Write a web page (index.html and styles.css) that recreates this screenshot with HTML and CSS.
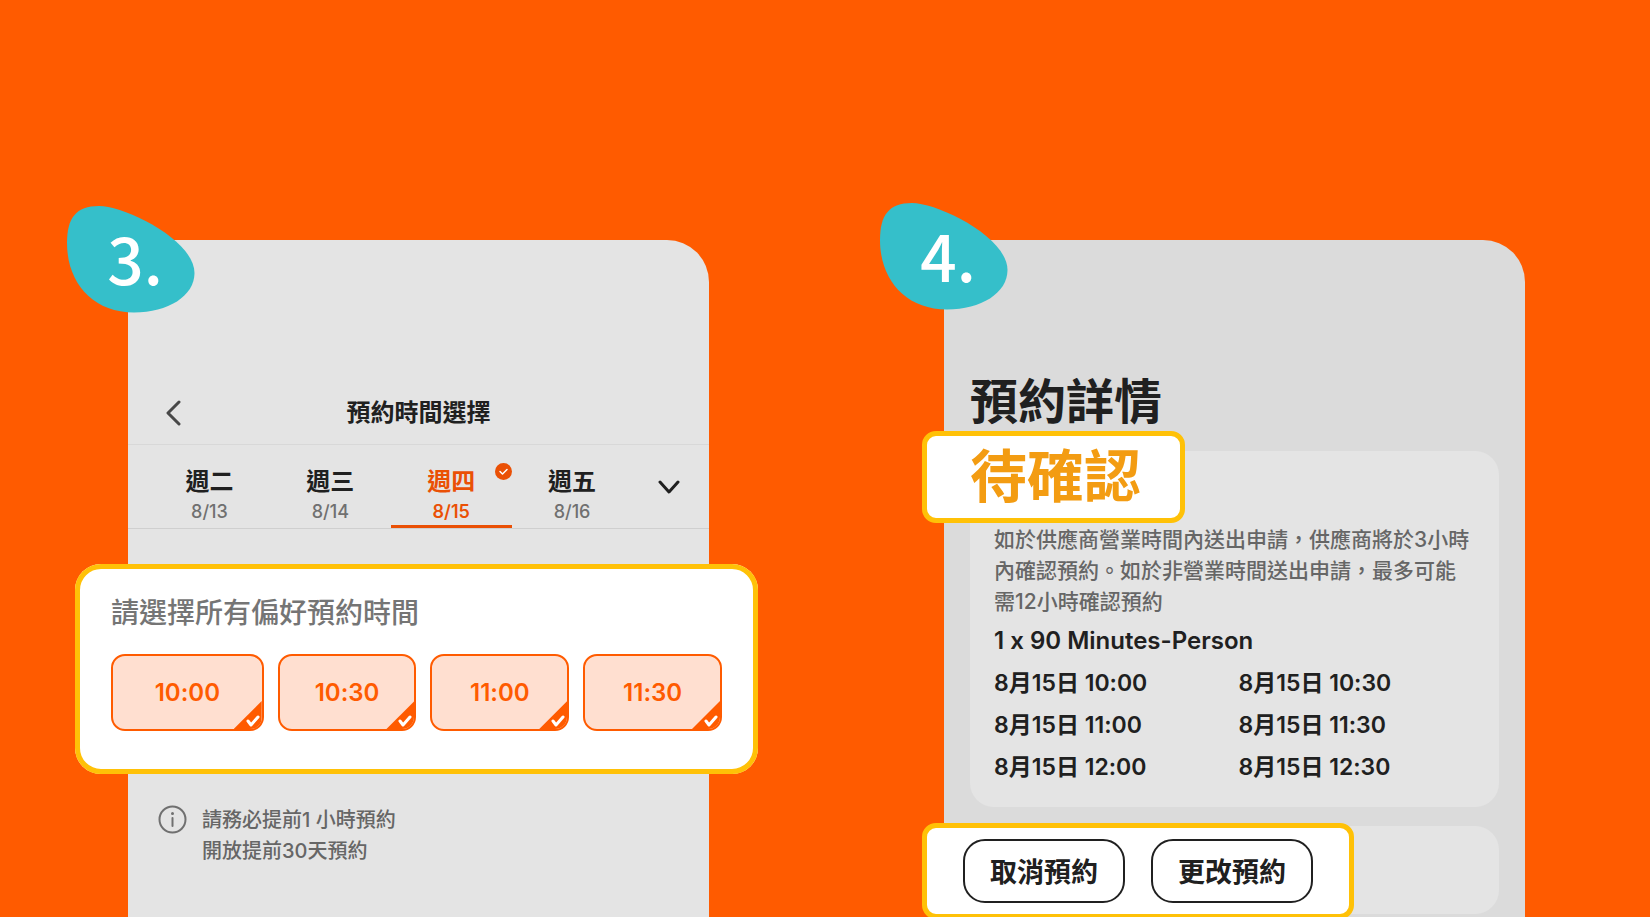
FILE: index.html
```
<!DOCTYPE html>
<html lang="zh-Hant">
<head>
    <meta charset="UTF-8">
    <meta name="viewport" content="width=device-width, initial-scale=1.0">
    <title>預約步驟</title>
    <link rel="stylesheet" href="styles.css">
</head>
<body>
    <main class="steps">
        <section class="phone phone-time">
            <div class="step-badge">
                <svg class="blob" viewBox="0 0 128 107" aria-hidden="true"><path d="M0 37C0 12 9 0 32 0C58 0 127.500 34 127.500 67C127.500 90 101 106.500 67 106.500C25 106.500 0 76 0 37Z"/></svg>
                <span class="step-number">3.</span>
            </div>
            <header class="phone-header">
                <button class="back-button" aria-label="返回">
                    <svg width="16" height="26" viewBox="0 0 16 26"><path d="M14 2L3 13L14 24"/></svg>
                </button>
                <h2 class="phone-title">預約時間選擇</h2>
            </header>
            <nav class="tabs">
                <button class="tab"><span class="tab-day">週二</span><span class="tab-date">8/13</span></button>
                <button class="tab"><span class="tab-day">週三</span><span class="tab-date">8/14</span></button>
                <button class="tab active">
                    <span class="tab-day">週四</span><span class="tab-date">8/15</span>
                    <svg class="tab-check" viewBox="0 0 17 17"><circle cx="8.5" cy="8.5" r="8.5"/><path d="M5 8.5L7.5 11L12 6.5"/></svg>
                </button>
                <button class="tab"><span class="tab-day">週五</span><span class="tab-date">8/16</span></button>
                <button class="more-button" aria-label="更多日期">
                    <svg width="22" height="14" viewBox="0 0 22 14"><path d="M2 2L11 12L20 2"/></svg>
                </button>
            </nav>
            <fieldset class="callout slot-card">
                <legend class="slot-title">請選擇所有偏好預約時間</legend>
                <div class="slots">
                    <label class="slot">10:00
                        <input class="slot-input" type="checkbox" checked>
                        <svg class="slot-check" viewBox="0 0 14 12"><path d="M2 6L5 10L12 2"/></svg>
                    </label>
                    <label class="slot">10:30
                        <input class="slot-input" type="checkbox" checked>
                        <svg class="slot-check" viewBox="0 0 14 12"><path d="M2 6L5 10L12 2"/></svg>
                    </label>
                    <label class="slot">11:00
                        <input class="slot-input" type="checkbox" checked>
                        <svg class="slot-check" viewBox="0 0 14 12"><path d="M2 6L5 10L12 2"/></svg>
                    </label>
                    <label class="slot">11:30
                        <input class="slot-input" type="checkbox" checked>
                        <svg class="slot-check" viewBox="0 0 14 12"><path d="M2 6L5 10L12 2"/></svg>
                    </label>
                </div>
            </fieldset>
            <div class="info">
                <svg class="info-icon" viewBox="0 0 29 29" aria-hidden="true"><circle cx="14.5" cy="14.5" r="13"/><path d="M14.5 13V21"/><circle class="dot" cx="14.5" cy="8.5" r="1.5"/></svg>
                <p class="note info-note">請務必提前1 小時預約<br>開放提前30天預約</p>
            </div>
        </section>

        <section class="phone phone-details">
            <div class="step-badge">
                <svg class="blob" viewBox="0 0 128 107" aria-hidden="true"><path d="M0 37C0 12 9 0 32 0C58 0 127.500 34 127.500 67C127.500 90 101 106.500 67 106.500C25 106.500 0 76 0 37Z"/></svg>
                <span class="step-number">4.</span>
            </div>
            <h1 class="details-title">預約詳情</h1>
            <div class="card booking">
                <div class="callout status">待確認</div>
                <p class="note">如於供應商營業時間內送出申請，供應商將於3小時內確認預約。如於非營業時間送出申請，最多可能需12小時確認預約</p>
                <p class="product">1 x 90 Minutes-Person</p>
                <ul class="times">
                    <li>8月15日 10:00</li>
                    <li>8月15日 10:30</li>
                    <li>8月15日 11:00</li>
                    <li>8月15日 11:30</li>
                    <li>8月15日 12:00</li>
                    <li>8月15日 12:30</li>
                </ul>
            </div>
            <div class="card actions">
                <div class="callout action-buttons">
                    <button class="action">取消預約</button>
                    <button class="action">更改預約</button>
                </div>
            </div>
        </section>
    </main>
</body>
</html>
```
FILE: styles.css
```
* {
    box-sizing: border-box;
}
body {
    margin: 0;
    background-color: #ff5b00;
    color: #202020;
    font-family: Inter, "Noto Sans CJK TC", sans-serif;
    font-weight: 500;
    font-feature-settings: "calt" 0; /* keep the plain "x" between numbers */
}
h1, h2, p, ul {
    margin: 0;
    padding: 0;
}
button {
    border: none;
    padding: 0;
    background: none;
    color: inherit;
    font: inherit;
    cursor: pointer;
}
svg {
    display: block;
    fill: none;
    stroke: currentColor;
    stroke-width: 3;
    stroke-linecap: round;
    stroke-linejoin: round;
}
.steps {
    display: grid;
    grid-template-columns: 1fr 1fr;
    gap: 235px;
    height: 100vh;
    padding: 240px 125px 0 128px;
    overflow: hidden;
}
.phone {
    position: relative;
    border-radius: 42px 42px 0 0;
}
.phone-time {
    padding-top: 141px;
    background-color: #e4e4e4;
}
.phone-details {
    padding: 132px 26px 0;
    background-color: #dbdbdb;
}
.callout {
    border: 5px solid #ffc107;
    border-radius: 14px;
    background-color: #fff;
}

/* Step number */
.step-badge {
    position: absolute;
    top: -34px;
    left: -61px;
    display: grid;
    width: 128px;
    height: 107px;
    place-items: center;
}
.phone-details .step-badge {
    top: -37px;
    left: -64px;
}
.blob, .step-number {
    grid-area: 1 / 1;
}
.blob {
    width: 100%;
    fill: #35bfca;
    stroke: none;
}
.step-number {
    padding: 0 0 6px 8px;
    color: #fff;
    font-family: "Noto Sans CJK TC", sans-serif;
    font-size: 64px;
    line-height: 64px;
}

/* Date picker */
.phone-header {
    display: grid;
    grid-template-columns: 53px 1fr 53px;
    align-items: center;
    height: 64px;
    border-bottom: 1px solid #d8d8d8;
}
.back-button {
    justify-self: end;
    color: #484848;
}
.phone-title {
    font-size: 24px;
    font-weight: 700;
    line-height: 32px;
    text-align: center;
}
.tabs {
    display: flex;
    padding: 0 4px 0 21px;
    border-bottom: 1px solid #cfcfcf;
}
.tab {
    position: relative;
    display: flex;
    flex: 5;
    flex-direction: column;
    align-items: center;
    padding-top: 21px;
    border-bottom: 3px solid transparent;
}
.tab-day {
    font-size: 24px;
    font-weight: 700;
    line-height: 32px;
}
.tab-date {
    color: #707070;
    font-size: 18px;
    line-height: 27px;
}
.tab.active {
    border-color: #ea5005;
}
.active .tab-day, .active .tab-date {
    color: #ea5005;
}
.active .tab-date {
    font-weight: 600;
}
.tab-check {
    position: absolute;
    top: 18px;
    right: 0;
    width: 17px;
    stroke: #fff;
    stroke-width: 1.5;
}
.tab-check circle {
    fill: #ea5005;
    stroke: none;
}
.more-button {
    display: flex;
    flex: 3;
    align-items: center;
    justify-content: center;
}

/* Time slots */
.slot-card {
    min-width: 0;
    margin: 35px -49px 0 -53px;
    padding: 24px 31px 38px;
    border-radius: 26px;
}
.slot-title {
    float: left;
    width: 100%;
    margin-bottom: 21px;
    padding: 0;
    color: #757575;
    font-size: 28px;
    line-height: 40px;
}
.slots {
    display: grid;
    grid-template-columns: 11fr 10fr 10fr 10fr;
    gap: 14px;
    clear: both;
}
.slot {
    position: relative;
    display: flex;
    align-items: center;
    justify-content: center;
    height: 77px;
    border: 2px solid #ff5b00;
    border-radius: 14px;
    background-color: #ffdfd0;
    color: #ff5b00;
    font-size: 24px;
    font-weight: 600;
    overflow: hidden;
    cursor: pointer;
}
.slot-input {
    position: absolute;
    right: 0;
    bottom: 0;
    width: 28px;
    height: 28px;
    margin: 0;
    appearance: none;
    clip-path: polygon(100% 0, 100% 100%, 0 100%);
}
.slot-input:checked {
    background-color: #ff5b00;
}
.slot-check {
    position: absolute;
    right: 2px;
    bottom: 2px;
    width: 14px;
    color: #fff;
    pointer-events: none;
}
.info {
    display: flex;
    gap: 15px;
    margin-top: 31px;
    padding-left: 30px;
    color: #707070;
}
.info-icon {
    width: 29px;
    height: 29px;
    stroke-width: 2;
}
.info-icon .dot {
    fill: currentColor;
    stroke: none;
}
.note {
    color: #666;
    font-size: 21px;
    line-height: 31px;
}
.info-note {
    font-size: 20px;
}

/* Booking details */
.details-title {
    font-size: 48px;
    font-weight: 700;
    line-height: 60px;
}
.card {
    position: relative;
    margin-top: 19px;
    border-radius: 24px;
    background-color: #e4e4e4;
}
.booking {
    padding: 73px 24px 19px;
}
.status {
    position: absolute;
    top: -20px;
    left: -48px;
    padding: 0 39px 0 43px;
    color: #f39c12;
    font-size: 57px;
    font-weight: 700;
    line-height: 82px;
}
.product {
    margin-top: 3px;
    font-size: 24px;
    font-weight: 600;
    line-height: 42px;
}
.times {
    display: grid;
    grid-template-columns: 1fr 1fr;
    column-gap: 8px;
    font-size: 23px;
    font-weight: 600;
    line-height: 42px;
    list-style: none;
}
.actions {
    height: 88px;
}
.action-buttons {
    position: absolute;
    top: -3px;
    left: -48px;
    display: flex;
    gap: 26px;
    padding: 11px 36px;
}
.action {
    height: 64px;
    padding: 0 25px 2px;
    border: 2px solid #202020;
    border-radius: 22px;
    font-size: 27px;
    font-weight: 700;
    white-space: nowrap;
}
```
